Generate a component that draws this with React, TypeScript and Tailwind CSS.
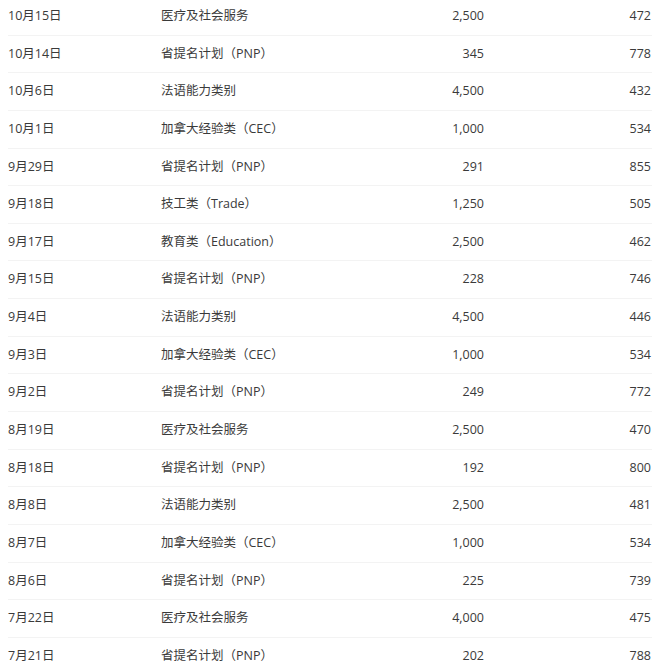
import React from 'react';

const rows: [string, string, string, string][] = [
  ['10月15日', '医疗及社会服务', '2,500', '472'],
  ['10月14日', '省提名计划（PNP）', '345', '778'],
  ['10月6日', '法语能力类别', '4,500', '432'],
  ['10月1日', '加拿大经验类（CEC）', '1,000', '534'],
  ['9月29日', '省提名计划（PNP）', '291', '855'],
  ['9月18日', '技工类（Trade）', '1,250', '505'],
  ['9月17日', '教育类（Education）', '2,500', '462'],
  ['9月15日', '省提名计划（PNP）', '228', '746'],
  ['9月4日', '法语能力类别', '4,500', '446'],
  ['9月3日', '加拿大经验类（CEC）', '1,000', '534'],
  ['9月2日', '省提名计划（PNP）', '249', '772'],
  ['8月19日', '医疗及社会服务', '2,500', '470'],
  ['8月18日', '省提名计划（PNP）', '192', '800'],
  ['8月8日', '法语能力类别', '2,500', '481'],
  ['8月7日', '加拿大经验类（CEC）', '1,000', '534'],
  ['8月6日', '省提名计划（PNP）', '225', '739'],
  ['7月22日', '医疗及社会服务', '4,000', '475'],
  ['7月21日', '省提名计划（PNP）', '202', '788'],
];

const App = () => {
  return (
    <div
      className="w-[660px] h-[671px] overflow-hidden bg-white text-[#3a3a3a] text-[12.5px]"
      style={{ fontFamily: '"Open Sans", "Noto Sans CJK SC", sans-serif' }}
    >
      <div className="-mt-[2px] px-2">
        {rows.map(([date, category, invited, score], i) => (
          <div key={i} className="flex items-center h-[37.65px] border-b border-[#f3f3f3]">
            <div className="w-[153px]">{date}</div>
            <div className="w-[200px]">{category}</div>
            <div className="w-[123px] text-right">{invited}</div>
            <div className="flex-1 text-right pr-[1px]">{score}</div>
          </div>
        ))}
      </div>
    </div>
  );
};

export default App;
